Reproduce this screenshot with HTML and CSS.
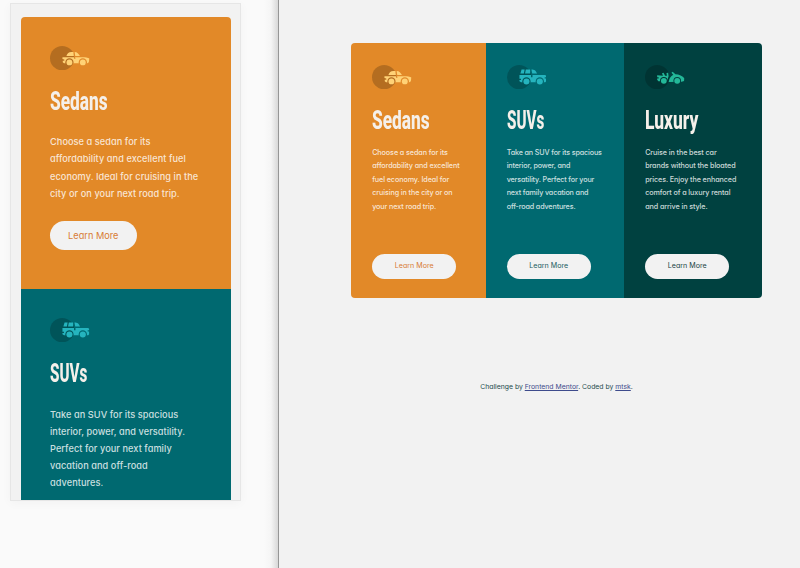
FILE: index.html
```html
<!DOCTYPE html>
<html lang="en">
<head>
<meta charset="utf-8">
<title>3-column preview card</title>
<link rel="stylesheet" href="styles.css">
</head>
<body>
<svg class="defs" width="0" height="0" aria-hidden="true">
  <mask id="arches" maskUnits="userSpaceOnUse" x="0" y="0" width="70" height="40">
    <rect width="70" height="40" fill="#fff"/>
    <circle cx="32" cy="27" r="6.800"/><circle cx="54" cy="27" r="6.800"/>
  </mask>
  <mask id="arches-low" maskUnits="userSpaceOnUse" x="0" y="0" width="70" height="40">
    <rect width="70" height="40" fill="#fff"/>
    <circle cx="31" cy="26" r="6.300"/><circle cx="53" cy="26" r="6.300"/>
  </mask>
  <symbol id="sedan" viewBox="0 0 65 40">
    <circle cx="20" cy="20" r="20" fill="#000" fill-opacity=".2"/>
    <g mask="url(#arches)" fill="currentColor">
      <path d="M27 16.500c1.500-4 3.800-6.500 8-6.500h3.500l.8 6.500zM40.500 10c4.500.2 6.500 3 8.800 6.500h-7.800z"/>
      <path d="M20.500 18.500h19l.8 3h1.500l-.5-3H53c5 0 9.500.5 12 2l-1 5.500c-.5 1.700-2 2.500-4 2.500H23l-2-2V24h2.500v-2l-3-.8z"/>
    </g>
    <circle cx="32" cy="27" r="4.800" fill="currentColor"/><circle cx="54" cy="27" r="4.800" fill="currentColor"/>
  </symbol>
  <symbol id="suv" viewBox="0 0 65 40">
    <circle cx="20" cy="20" r="20" fill="#000" fill-opacity=".2"/>
    <g mask="url(#arches)" fill="currentColor">
      <path d="M24 7.500h5l-1.200 6.500H22zM31 7.500h7v6.500h-8.300zM40.200 7.500c5 0 6.800 1.500 9.300 6.500h-8z"/>
      <path d="M20.500 16.500h19V20H42v-3.500h21l1.500 1.500v2H62v2h2.500v4.500l-1.500 2H23l-2.500-2v-2H23v-2h-2.500z"/>
    </g>
    <circle cx="32" cy="27" r="5" fill="currentColor"/><circle cx="54" cy="27" r="5" fill="currentColor"/>
  </symbol>
  <symbol id="luxury" viewBox="0 0 65 40">
    <circle cx="20" cy="20" r="20" fill="#000" fill-opacity=".2"/>
    <g mask="url(#arches-low)" fill="currentColor">
      <path d="M20 17l9.500.5-1.500-4 2.500-.8 2.600 4.800h3l-.8-4.500 2.800-.5.8 6-2.800 8H22l-2-2.500v-2h2.500v-2H20z"/>
      <path d="M39 28c.5-5 2.500-9 7.500-12l-3-3.500 2-1.500 4.500 4.200c6 .2 12 2.500 15 7l-.7 4-4 1.500z"/>
    </g>
    <circle cx="31" cy="26" r="4.800" fill="currentColor"/><circle cx="53" cy="26" r="4.800" fill="currentColor"/>
  </symbol>
</svg>
<main class="showcase">
  <section class="mobile">
    <div class="phone">
      <div class="stack">
        <article class="card sedans">
          <svg class="icon"><use href="#sedan"/></svg>
          <h2><span>Sedans</span></h2>
          <p>Choose a sedan for its<br>affordability and excellent fuel<br>economy. Ideal for cruising in the<br>city or on your next road trip.</p>
          <a class="button">Learn More</a>
        </article>
        <article class="card suvs">
          <svg class="icon"><use href="#suv"/></svg>
          <h2><span>SUVs</span></h2>
          <p>Take an SUV for its spacious<br>interior, power, and versatility.<br>Perfect for your next family<br>vacation and off-road<br>adventures.</p>
        </article>
      </div>
    </div>
  </section>
  <section class="desktop">
    <div class="columns">
      <article class="card sedans">
        <svg class="icon"><use href="#sedan"/></svg>
        <h2><span>Sedans</span></h2>
        <p>Choose a sedan for its<br>affordability and excellent<br>fuel economy. Ideal for<br>cruising in the city or on<br>your next road trip.</p>
        <a class="button">Learn More</a>
      </article>
      <article class="card suvs">
        <svg class="icon"><use href="#suv"/></svg>
        <h2><span>SUVs</span></h2>
        <p>Take an SUV for its spacious<br>interior, power, and<br>versatility. Perfect for your<br>next family vacation and<br>off-road adventures.</p>
        <a class="button">Learn More</a>
      </article>
      <article class="card luxury">
        <svg class="icon"><use href="#luxury"/></svg>
        <h2><span>Luxury</span></h2>
        <p>Cruise in the best car<br>brands without the bloated<br>prices. Enjoy the enhanced<br>comfort of a luxury rental<br>and arrive in style.</p>
        <a class="button">Learn More</a>
      </article>
    </div>
    <footer>Challenge by <u>Frontend Mentor</u>. Coded by <u>mtsk</u>.</footer>
  </section>
</main>
</body>
</html>
```

FILE: styles.css
```css
* { box-sizing: border-box; }
body {
  margin: 0;
  overflow: hidden;
  font-family: Inter, "Open Sans", sans-serif;
  font-feature-settings: "cv11";
}
.defs { display: block; height: 0; }
.showcase { display: flex; height: 568px; background: #f2f2f2; }
.mobile {
  width: 279px;
  padding: 3px 0 0 10px;
  border-right: 1px solid #969696;
  background: linear-gradient(to right, #fafafa 264px, #f5f5f5 271px, #d8d8d8 278px);
}
.phone {
  width: 231px;
  height: 498px;
  padding: 12.500px 9px 0 10px;
  border: 1px solid #e6e6e6;
  background: #f2f2f2;
  box-shadow: 0 2px 10px rgba(0, 0, 0, .035);
}
.stack { height: 483.500px; border-radius: 4px 4px 0 0; overflow: hidden; }
.card { display: flex; flex-direction: column; align-items: flex-start; color: rgba(255, 255, 255, .8); }
.sedans { background: #e28928; }
.suvs { background: #006970; }
.luxury { background: #004140; }
.sedans .icon { color: #ffd276; }
.suvs .icon { color: #25b4be; }
.luxury .icon { color: #23b899; }
.icon { display: block; flex: none; width: 39.500px; height: 24.400px; }
h2 {
  margin: 0;
  height: 30px;
  color: #f5f0ea;
  font: 800 26px/30px Roboto, sans-serif;
}
h2 span { display: inline-block; transform: scaleX(.665); transform-origin: 0 50%; }
.suvs h2 span { transform: scaleX(.585); }
.luxury h2 span { transform: scaleX(.67); }
p { margin: 0; white-space: nowrap; }
.button {
  display: flex;
  justify-content: center;
  border-radius: 20px;
  background: #f2f2f2;
  white-space: nowrap;
}
.sedans .button { color: #d87c35; }
.suvs .button { color: #1c5c61; }
.luxury .button { color: #1a4544; }
.mobile .card { padding: 29px; height: 272.500px; }
.mobile .suvs { height: 211px; }
.mobile h2 { margin-top: 16px; }
.mobile p { margin-top: 17.500px; font-size: 9.200px; font-weight: 500; line-height: 17.100px; letter-spacing: .06px; }
.mobile .button { width: 86.500px; height: 29px; margin-top: 19px; font-size: 9.200px; line-height: 29px; }
.desktop { flex: 1; padding: 43px 38px 0 72px; }
.columns {
  display: grid;
  grid-template-columns: 134.500px 138.500px 138px;
  height: 254.500px;
  overflow: hidden;
  border-radius: 4px;
}
.desktop .card { padding: 22px 21.200px; }
.desktop h2 { margin-top: 15.500px; }
.desktop p { margin-top: 11px; font-size: 7.200px; font-weight: 500; line-height: 13.450px; letter-spacing: -.09px; }
.desktop .suvs p { letter-spacing: -.14px; }
.desktop .button { width: 84px; height: 24.500px; margin-top: 41px; font-size: 7.100px; line-height: 23px; }
footer { margin-top: 83.500px; text-align: center; color: #234b4d; font-size: 6.850px; line-height: 12px; white-space: nowrap; }
footer u { color: #3e4b8c; }
```
